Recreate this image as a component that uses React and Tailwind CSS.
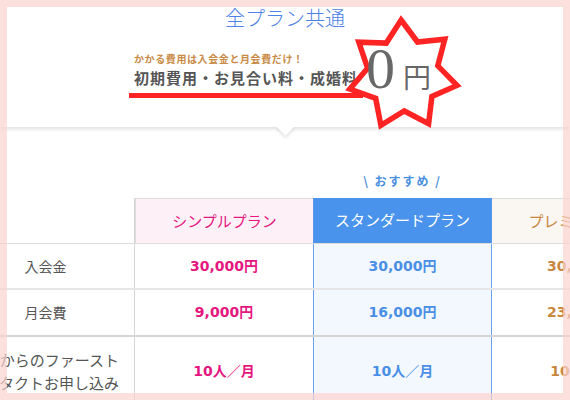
const jp = { fontFamily: '"Noto Sans CJK JP", sans-serif' };
const num = { fontFamily: '"DejaVu Sans", "Noto Sans CJK JP", sans-serif' };

const starPoints = (cx, cy, R, r, n = 7, rot = -92) => {
  const pts = [];
  for (let i = 0; i < n * 2; i++) {
    const rad = i % 2 === 0 ? R : r;
    const a = ((rot + (i * 180) / n) * Math.PI) / 180;
    pts.push(`${(cx + rad * Math.cos(a)).toFixed(1)},${(cy + rad * Math.sin(a)).toFixed(1)}`);
  }
  return pts.join(" ");
};

const plans = [
  { name: "シンプルプラン", head: "bg-[#fdf1f7] text-[#e5177f] border-t border-l border-[#dcdcdc]", cell: "text-[#e5177f]", body: "" },
  { name: "スタンダードプラン", head: "bg-[#4a93ec] text-white border-x border-[#5a95ec]", cell: "text-[#4a8fe6]", body: "bg-[#f3f8ff] border-x border-[#6b9ff0]" },
  { name: "プレミアプラン", head: "bg-[#faf6f1] text-[#c8873f] border-t border-[#dcdcdc]", cell: "text-[#c8873f]", body: "" },
];

const rows = [
  { label: ["入会金"], vals: ["30,000円", "30,000円", "30,000円"], h: "h-[46px]", line: "border-[#e6e6e6]", lab: "items-center text-[14px]" },
  { label: ["月会費"], vals: ["9,000円", "16,000円", "23,000円"], h: "h-[47px]", line: "border-[#d4d4d4]", lab: "items-center text-[14px]" },
  {
    label: ["お相手からのファースト", "コンタクトお申し込み"],
    vals: ["10人／月", "10人／月", "10人／月"],
    h: "h-[70px]",
    line: "border-transparent",
    lab: "items-end pr-[15px] text-[15px]",
  },
];

export default function App() {
  return (
    <div className="relative w-[570px] h-[400px] overflow-hidden bg-white" style={jp}>
      {/* top box */}
      <div className="relative h-[127px] bg-white shadow-[0_3px_4px_-1px_rgba(0,0,0,0.13)] z-10">
        <h2 className="pt-[4px] text-center text-[20px] leading-[28px] font-light text-[#4d81e6]">全プラン共通</h2>
        <div className="pl-[134px] mt-[20px]">
          <p className="text-[10px] leading-[14px] font-bold tracking-[0.6px] text-[#c98a45]">かかる費用は入会金と月会費だけ！</p>
          <p className="mt-[2px] text-[15px] leading-[20px] font-bold tracking-[1px] text-[#555]">初期費用・お見合い料・成婚料</p>
        </div>
        <div className="ml-[129px] mt-[5px] w-[234px] h-[5px] bg-[#ff2424]" />
        <div className="absolute left-[279px] bottom-[-6px] w-[13px] h-[13px] rotate-45 bg-white shadow-[2px_2px_3px_rgba(0,0,0,0.1)]" />
        <svg className="absolute left-[340px] top-[8px]" width="130" height="130" viewBox="0 0 130 130">
          <polygon points={starPoints(63, 67, 55, 36)} fill="white" stroke="#ff2424" strokeWidth="5.5" strokeLinejoin="miter" />
        </svg>
        <div className="absolute left-[366px] top-[40px] flex items-baseline text-[#686868]">
          <span className="text-[58px] leading-none" style={{ fontFamily: '"Liberation Serif", serif' }}>0</span>
          <span className="ml-[8px] text-[28px] leading-none">円</span>
        </div>
      </div>

      {/* recommend */}
      <div className="mt-[46px] flex">
        <div className="w-[313px] shrink-0" />
        <div className="w-[179px] shrink-0 text-center text-[12px] leading-[16px] font-bold tracking-[2px] text-[#4a8fe0]">
          \ おすすめ /
        </div>
      </div>

      {/* table */}
      <div className="mt-[9px] ml-[-43px] w-[713px]">
        <div className="flex h-[46px] border-b border-[#dcdcdc]">
          <div className="w-[178px] shrink-0 border-r border-[#d4d4d4]" />
          {plans.map((p, i) => (
            <div key={p.name} className={`${i === 1 ? "w-[179px]" : "w-[178px]"} shrink-0 flex items-center justify-center text-[15px] ${p.head}`}>
              {p.name}
            </div>
          ))}
        </div>
        {rows.map((r) => (
          <div key={r.label[0]} className={`flex ${r.h} border-b-2 ${r.line}`}>
            <div className={`w-[178px] shrink-0 flex flex-col justify-center border-r border-[#d4d4d4] leading-[23px] text-[#555] whitespace-nowrap ${r.lab}`}>
              {r.label.map((l) => (
                <span key={l}>{l}</span>
              ))}
            </div>
            {plans.map((p, i) => (
              <div
                key={p.name}
                className={`${i === 1 ? "w-[179px]" : "w-[178px]"} shrink-0 flex items-center justify-center text-[14px] font-bold ${p.cell} ${p.body}`}
                style={num}
              >
                {r.vals[i]}
              </div>
            ))}
          </div>
        ))}
      </div>

      {/* pink frame */}
      <div className="absolute inset-0 z-20 border-[7px] border-[#fbd3ce]/70 pointer-events-none" />
    </div>
  );
}
